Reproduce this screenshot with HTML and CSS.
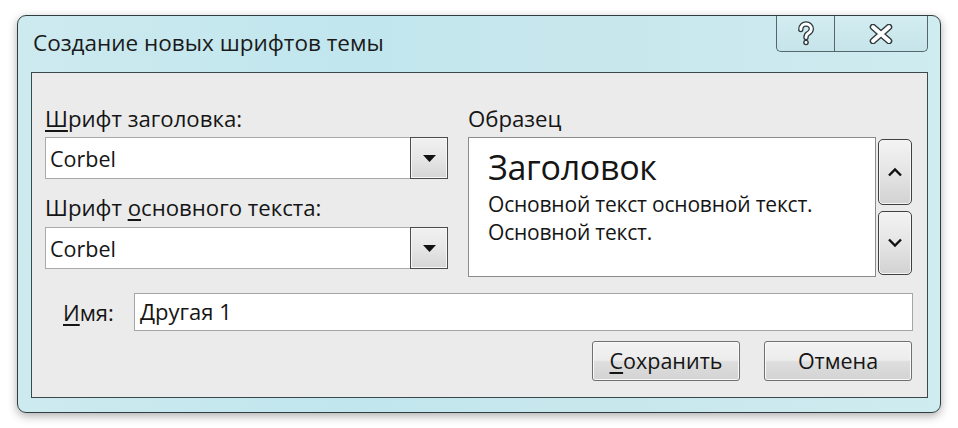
FILE: index.html
```html
<!DOCTYPE html>
<html lang="ru">
<head>
<meta charset="utf-8">
<link rel="stylesheet" href="styles.css">
</head>
<body>
<div class="window">
  <div class="titlebar">
    <div class="title">Создание новых шрифтов темы</div>
    <div class="caption-btns">
      <div class="cbtn help">
        <svg width="18" height="26" viewBox="0 0 18 26">
          <path d="M3.8 8.5 C3.8 4.5 6.5 3 9 3 C12.2 3 14.3 5.2 14.3 8 C14.3 10.6 12.3 11.8 10.7 12.8 C9.6 13.5 9 14.4 9 16.5" fill="none" stroke="#2e3a3e" stroke-width="5.4" stroke-linecap="round"/>
          <circle cx="9" cy="21.5" r="2.8" fill="#2e3a3e"/>
          <path d="M3.8 8.5 C3.8 4.5 6.5 3 9 3 C12.2 3 14.3 5.2 14.3 8 C14.3 10.6 12.3 11.8 10.7 12.8 C9.6 13.5 9 14.4 9 16.5" fill="none" stroke="#ffffff" stroke-width="2.8" stroke-linecap="round"/>
          <circle cx="9" cy="21.5" r="1.4" fill="#ffffff"/>
        </svg>
      </div>
      <div class="cbtn close">
        <svg width="26" height="20" viewBox="0 0 26 20">
          <path d="M5 3 L21 17 M21 3 L5 17" fill="none" stroke="#2e3a3e" stroke-width="6.6" stroke-linecap="round"/>
          <path d="M5 3 L21 17 M21 3 L5 17" fill="none" stroke="#ffffff" stroke-width="3.8" stroke-linecap="round"/>
        </svg>
      </div>
    </div>
  </div>
  <div class="client">
    <div class="top">
      <div class="left-col">
        <div class="label label-first"><u>Ш</u>рифт заголовка:</div>
        <div class="combo">
          <span class="value">Corbel</span>
          <span class="drop"><svg width="13" height="7" viewBox="0 0 13 7"><path d="M0 0 H13 L6.5 7 Z" fill="#111"/></svg></span>
        </div>
        <div class="label label-second">Шрифт <u>о</u>сновного текста:</div>
        <div class="combo">
          <span class="value">Corbel</span>
          <span class="drop"><svg width="13" height="7" viewBox="0 0 13 7"><path d="M0 0 H13 L6.5 7 Z" fill="#111"/></svg></span>
        </div>
      </div>
      <div class="right-col">
        <div class="label label-first">Образец</div>
        <div class="sample-row">
          <div class="sample">
            <div class="sample-head">Заголовок</div>
            <div class="sample-body first">Основной текст основной текст.</div>
            <div class="sample-body">Основной текст.</div>
          </div>
          <div class="scroll">
            <div class="sbtn up"><svg width="16" height="10" viewBox="0 0 16 10"><path d="M2 8.5 L8 2.5 L14 8.5" fill="none" stroke="#111" stroke-width="2.4"/></svg></div>
            <div class="sbtn down"><svg width="16" height="10" viewBox="0 0 16 10"><path d="M2 1.5 L8 7.5 L14 1.5" fill="none" stroke="#111" stroke-width="2.4"/></svg></div>
          </div>
        </div>
      </div>
    </div>
    <div class="name-row">
      <div class="name-label"><u>И</u>мя:</div>
      <div class="name-input">Другая 1</div>
    </div>
    <div class="buttons">
      <div class="btn"><u>С</u>охранить</div>
      <div class="btn">Отмена</div>
    </div>
  </div>
</div>
</body>
</html>
```

FILE: styles.css
```css
* { box-sizing: border-box; }
html, body { margin: 0; padding: 0; background: #ffffff; }
body {
  font-family: "Open Sans", "Noto Sans", "DejaVu Sans", sans-serif;
  color: #151515;
  width: 958px;
  height: 428px;
  overflow: hidden;
}
u { text-decoration: underline; text-underline-offset: 3px; text-decoration-thickness: 2px; }

.window {
  margin: 15px 0 0 17px;
  width: 924px;
  height: 398px;
  border: 1px solid #2f3c40;
  border-radius: 9px;
  background: linear-gradient(90deg, #cdeaef 0%, #c1e6ee 35%, #c8e7ec 65%, #cfecf0 100%);
  box-shadow: 0 3px 10px rgba(0,0,0,0.32);
  padding: 0 12px 14px 13px;
  display: flex;
  flex-direction: column;
}

.titlebar {
  height: 56px;
  display: flex;
  align-items: flex-start;
}
.title {
  margin: 12px 0 0 2px;
  font-size: 22.5px;
  line-height: 30px;
  color: #1a1a1a;
}
.caption-btns {
  margin-left: auto;
  display: flex;
  height: 36px;
}
.cbtn {
  height: 36px;
  border: 1px solid #56676c;
  border-top: none;
  display: flex;
  align-items: center;
  justify-content: center;
  background: linear-gradient(180deg, #d3edf1, #c6e4ea);
}
.cbtn.help { width: 58px; border-right: none; border-bottom-left-radius: 5px; }
.cbtn.close { width: 94px; border-bottom-right-radius: 5px; }

.client {
  flex: 1;
  background: #ebebeb;
  border: 1px solid #3b494d;
  padding: 34px 15px 0 13px;
  display: flex;
  flex-direction: column;
}

.top { display: flex; gap: 20px; }
.left-col { width: 403px; display: flex; flex-direction: column; }
.right-col { flex: 1; display: flex; flex-direction: column; }

.label {
  font-size: 22.2px;
  line-height: 24px;
}
.label-first { margin-bottom: 6px; }
.label-second { margin-top: 17px; margin-bottom: 7px; }

.combo {
  height: 42px;
  border: 1px solid #a9a9a9;
  background: #fff;
  display: flex;
  align-items: center;
}
.combo .value {
  flex: 1;
  padding-left: 4px;
  font-size: 21.5px;
}
.combo .drop {
  align-self: stretch;
  width: 38px;
  margin: -1px -1px -1px 0;
  border: 1px solid #4c4c4c;
  box-shadow: inset 0 0 0 1px #f7f7f7;
  background: linear-gradient(180deg, #f1f1f1 0%, #e6e6e6 50%, #d6d6d6 100%);
  display: flex;
  align-items: center;
  justify-content: center;
}

.sample-row { display: flex; gap: 2px; }
.sample {
  width: 408px;
  height: 140px;
  background: #fff;
  border: 1px solid #8c8c8c;
  padding: 9px 0 0 19px;
}
.sample-head {
  font-size: 34px;
  line-height: 40px;
  letter-spacing: -0.3px;
}
.sample-body {
  font-size: 21px;
  line-height: 28px;
  letter-spacing: -0.2px;
}
.sample-body.first { margin-top: 3px; }
.scroll {
  width: 34px;
  padding-top: 2px;
  display: flex;
  flex-direction: column;
  gap: 6px;
}
.sbtn {
  border: 1px solid #404040;
  border-radius: 5px;
  box-shadow: inset 0 0 0 1px #f5f5f5;
  background: linear-gradient(180deg, #f3f3f3 0%, #e5e5e5 50%, #d2d2d2 100%);
  display: flex;
  align-items: center;
  justify-content: center;
}
.sbtn.up { height: 66px; }
.sbtn.down { height: 64px; }

.name-row {
  margin-top: 16px;
  display: flex;
  align-items: center;
}
.name-label {
  width: 89px;
  padding-left: 18px;
  font-size: 22px;
}
.name-input {
  flex: 1;
  height: 38px;
  margin-right: -1px;
  border: 1px solid #a5a5a5;
  background: #fff;
  padding-left: 5px;
  font-size: 22px;
  line-height: 35px;
}

.buttons {
  margin-top: 10px;
  display: flex;
  justify-content: flex-end;
  gap: 24px;
}
.btn {
  width: 148px;
  height: 40px;
  border: 1px solid #6f6f6f;
  border-radius: 3px;
  box-shadow: inset 0 0 0 1px #fafafa;
  background: linear-gradient(180deg, #f3f3f3 0%, #ececec 48%, #dedede 52%, #d3d3d3 100%);
  font-size: 21.5px;
  line-height: 37px;
  text-align: center;
}
```
